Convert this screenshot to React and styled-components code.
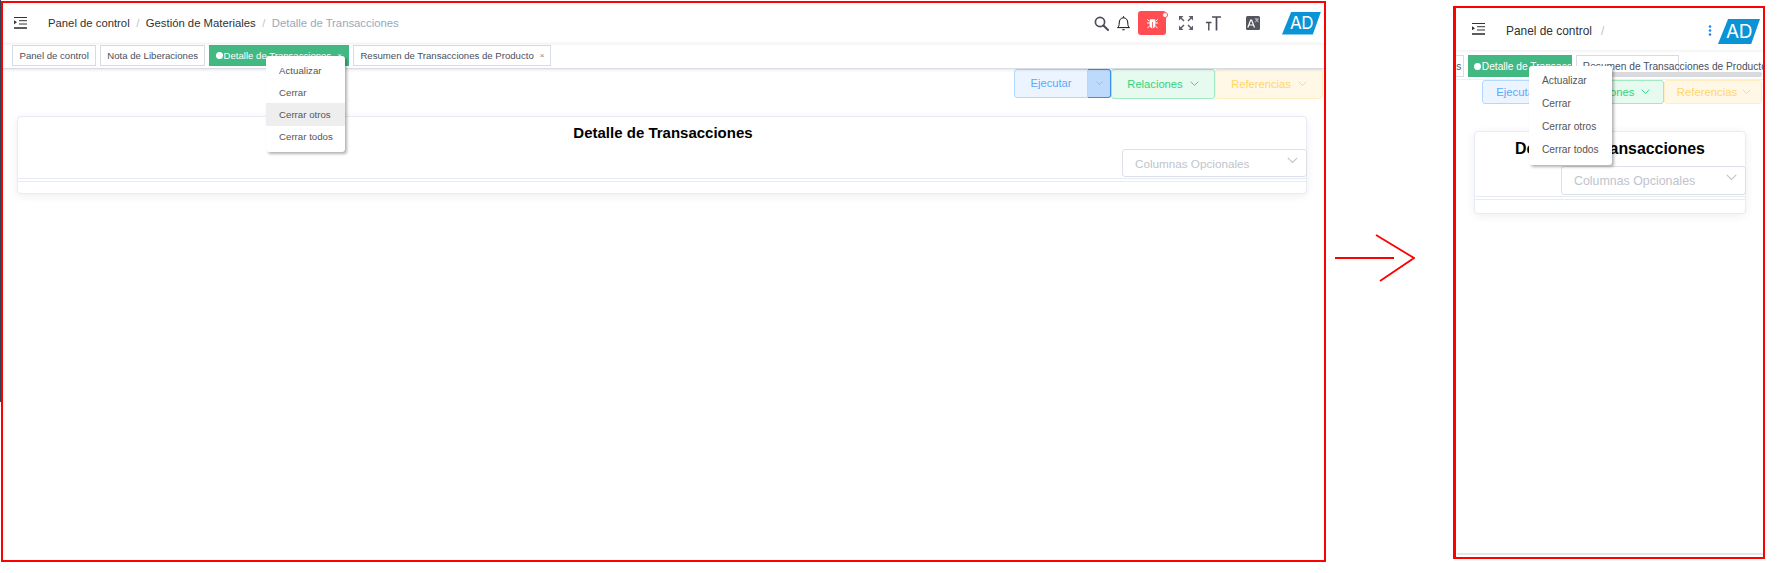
import React from 'react';
import styled, { createGlobalStyle } from 'styled-components';

const Global = createGlobalStyle`
  html, body { margin: 0; padding: 0; background: #fff; }
  body { font-family: "Liberation Sans", Arial, sans-serif; }
  * { box-sizing: border-box; }
`;

const Stage = styled.div`
  width: 1785px; height: 573px; display: flex; align-items: flex-start; overflow: hidden; background: #fff;
`;
const Sliver = styled.div`width: 1px; height: 402px; background: #304156; flex: none;`;
const Frame = styled.section`
  position: relative; flex: none; display: flex; flex-direction: column; overflow: hidden; background: #fff;
  border: 2px solid #ff0000;
  width: ${p => (p.$m ? 312 : 1325)}px;
  height: ${p => (p.$m ? 553 : 561)}px;
  margin-top: ${p => (p.$m ? 6 : 1)}px;
  ${p => p.$m && 'border-left-width: 3px;'}
`;
const ArrowSvg = styled.svg`flex: none; width: 80px; height: 50px; margin: 234px 38px 0 9px;`;

const Header = styled.header`
  flex: none; display: flex; align-items: center;
  height: ${p => (p.$m ? 42 : 40)}px;
  padding: ${p => (p.$m ? '0 3px 0 16px' : '0 3px 0 11px')};
  box-shadow: 0 1px 3px rgba(0, 21, 41, 0.07);
  position: relative; z-index: 1;
`;
const Crumbs = styled.nav`
  display: flex; align-items: center; white-space: nowrap; color: #303133;
  font-size: ${p => (p.$m ? 11.9 : 11.3)}px;
  margin-left: 21px;
  ${p => (p.$m ? 'margin-top: 4px;' : 'margin-bottom: 1px;')}
`;
const Sep = styled.span`color: #c0c4cc; margin: 0 ${p => (p.$m ? 9 : 6.5)}px;`;
const CrumbLast = styled.span`color: #97a8be;`;
const Tools = styled.div`margin-left: auto; display: flex; align-items: center;`;
const Slot = styled.span`display: flex; align-items: center; justify-content: center; flex: none; margin-left: ${p => p.$ml || 0}px;`;
const BugBox = styled.span`
  position: relative; flex: none; width: 28px; height: 24px; margin-left: 8px; border-radius: 3px; background: #ff4d51;
  display: flex; align-items: center; justify-content: center;
`;
const BugDot = styled.i`
  position: absolute; right: -2px; top: 1px; width: 6px; height: 6px; border-radius: 50%;
  background: #fff; border: 1.5px solid #ff4d51;
`;
const Logo = styled.div`
  flex: none; display: flex; align-items: center; justify-content: center;
  width: ${p => (p.$m ? 42 : 39)}px; height: ${p => (p.$m ? 25 : 23)}px;
  margin-left: ${p => (p.$m ? 6 : 22)}px;
  ${p => p.$m && 'margin-top: 5px;'}
  background: #0a93d5; color: #fff;
  font-family: Inter, "Liberation Sans", sans-serif; font-weight: 400;
  font-size: ${p => (p.$m ? 19 : 17)}px; letter-spacing: -0.5px;
  clip-path: polygon(24% 0, 100% 0, 79% 100%, 0 100%);
`;

const TabBar = styled.div`
  flex: none; position: relative; display: flex; overflow: hidden;
  height: ${p => (p.$m ? 30 : 26)}px;
  padding: ${p => (p.$m ? '5px 0 0 0' : '2px 0 0 9px')};
  gap: 4px; align-items: flex-start;
  border-bottom: 1px solid ${p => (p.$m ? '#eeeff2' : '#d8dce5')};
  ${p => !p.$m && 'box-shadow: 0 1px 3px rgba(0,0,0,0.1);'}
`;
const Tab = styled.div`
  flex: none; display: flex; align-items: center; white-space: nowrap;
  height: ${p => (p.$m ? 22 : 21)}px;
  padding: ${p => (p.$m ? '1px' : '0')} ${p => p.$tail ?? 6}px 0 ${p => (p.$m ? 5.5 : 6.5)}px;
  font-size: ${p => (p.$m ? 10.2 : 9.6)}px;
  border: 1px solid ${p => (p.$on ? '#42b983' : '#d8dce5')};
  background: ${p => (p.$on ? '#42b983' : '#fff')};
  color: ${p => (p.$on ? '#fff' : '#495060')};
  ${p => p.$w && `width: ${p.$w}px;`}
  ${p => p.$clip && 'overflow: hidden;'}
  ${p => p.$shift && `margin-left: ${p.$shift}px;`}
`;
const TabDot = styled.i`flex: none; width: 7px; height: 7px; border-radius: 50%; background: #fff; margin-right: 1px; margin-left: -1px;`;
const TabClose = styled.span`font-size: 8px; margin-left: 6px; color: ${p => (p.$on ? '#fff' : '#7b8494')};`;
const ScrollThumb = styled.div`
  position: absolute; left: 115px; right: 1px; top: 22px; height: 5px; border-radius: 2px; background: #d9dadd;
`;

const Toolbar = styled.div`
  flex: none; display: flex; justify-content: flex-end;
  height: ${p => (p.$m ? 24 : 30)}px;
  padding-right: 1px;
`;
const tones = {
  blue: ['#ecf5ff', '#b3d8ff', '#5aa9fb'],
  green: ['#e7faf0', '#a3e9c4', '#2fd47b'],
  yellow: ['#fff8e6', '#ffeec4', '#ffd666'],
};
const ActionBtn = styled.div`
  flex: none; display: flex; align-items: center; justify-content: center;
  gap: ${p => p.$gap ?? 7}px;
  padding-left: ${p => p.$lead ?? 0}px;
  font-size: ${p => (p.$m ? 11.3 : 11.2)}px;
  width: ${p => p.$w}px;
  height: 100%;
  background: ${p => tones[p.$tone][0]};
  border: 1px solid ${p => tones[p.$tone][1]};
  color: ${p => tones[p.$tone][2]};
  border-radius: ${p => p.$r || '3px'};
`;
const SplitDrop = styled.div`
  flex: none; display: flex; align-items: center; justify-content: center;
  width: ${p => p.$w}px; height: ${p => (p.$m ? '100%' : '29px')};
  background: #bddafc; border: 1px solid #3a8ee6; border-left: none; border-radius: 0 3px 3px 0; color: #7fb4ee;
`;
const MainBtn = styled(ActionBtn)`
  height: ${p => (p.$m ? '100%' : '29px')};
  padding-bottom: ${p => (p.$m ? 0 : 2)}px;
`;

const Card = styled.div`
  flex: none; background: #fff; border: 1px solid #e6ebf5; border-radius: 4px;
  box-shadow: 0 2px 10px rgba(0, 0, 0, 0.07);
  width: ${p => (p.$m ? 272 : 1290)}px;
  height: ${p => (p.$m ? 83 : 78)}px;
  margin: ${p => (p.$m ? '27px 0 0 18px' : '17px 0 0 14px')};
`;
const Title = styled.h1`
  margin: 0; text-align: center; font-weight: 700; color: #000; white-space: nowrap;
  font-size: ${p => (p.$m ? 15.9 : 15)}px;
  height: ${p => (p.$m ? 34 : 31)}px;
  line-height: ${p => (p.$m ? 34 : 31)}px;
  padding-left: ${p => (p.$m ? 0 : 2)}px;
`;
const SelectRow = styled.div`
  display: flex; justify-content: flex-end;
  margin: ${p => (p.$m ? 0 : '1px')} -1px 0 0;
`;
const SelectBox = styled.div`
  display: flex; justify-content: space-between;
  width: 185px; height: ${p => (p.$m ? 29 : 28)}px;
  border: 1px solid #dcdfe6; border-radius: 3px; background: #fff; color: #c0c4cc;
  font-size: ${p => (p.$m ? 12.4 : 11.7)}px;
  line-height: ${p => (p.$m ? 28 : 27)}px;
  padding: 0 8px 0 12px;
`;
const SelectChevron = styled.span`display: flex; margin-top: 7px;`;
const Rule = styled.div`height: 1px; background: #e6ebf5; margin-top: ${p => p.$t}px;`;

const Menu = styled.ul`
  position: absolute; z-index: 5; margin: 0; list-style: none; background: #fff; border-radius: 3px;
  box-shadow: 2px 2px 3px rgba(0, 0, 0, 0.3);
  left: ${p => (p.$m ? 73 : 263)}px;
  top: ${p => (p.$m ? 58 : 53)}px;
  width: ${p => (p.$m ? 83 : 79)}px;
  padding: 3px 0 4px;
`;
const MenuItem = styled.li`
  display: flex; align-items: center; white-space: nowrap; color: #555;
  height: ${p => (p.$m ? 23 : 22.2)}px;
  padding-left: 13px;
  font-size: ${p => (p.$m ? 10.2 : 9.7)}px;
  background: ${p => (p.$hot ? '#eee' : 'transparent')};
`;
const Foot = styled.div`margin: auto 0 2px 1px; height: 2px; background: #e6e6e6; flex: none;`;
const Dots = styled.svg`flex: none; display: block; margin: 2px 0 0 auto;`;

const Hamburger = () => (
  <svg width="13" height="12" viewBox="0 0 13 12" style={{ flex: 'none' }}>
    <path d="M0 .5h13M5 3.700h8M5 7h8" stroke="#333" strokeWidth="1" fill="none" />
    <path d="M0 11h13" stroke="#333" strokeWidth="1.600" />
    <path d="M0 3.200 3 5.200 0 7.200z" fill="#333" />
  </svg>
);
const Search = () => (
  <svg width="15" height="15" viewBox="0 0 15 15"><circle cx="6" cy="6" r="4.600" fill="none" stroke="#4a4d55" strokeWidth="1.700" /><path d="M9.500 9.500 14 14" stroke="#4a4d55" strokeWidth="2" strokeLinecap="round" /></svg>
);
const Bell = () => (
  <svg width="13" height="15" viewBox="0 0 13 15"><path d="M.5 11.600c1.300-1 1.700-2.200 1.700-4.600 0-3 1.600-5.200 4.300-5.200S10.800 4 10.800 7c0 2.400.4 3.600 1.700 4.600z" fill="none" stroke="#111" strokeWidth="1" /><path d="M6.500 .3v1.500M5.300 13.700h2.400" stroke="#111" strokeWidth="1.100" /></svg>
);
const BugIcon = () => (
  <svg width="11" height="11" viewBox="0 0 11 11"><ellipse cx="5.500" cy="6.500" rx="2.900" ry="3.700" fill="#fff" /><path d="M3.200 1.800h4.600v1.700H3.200zM0 5h11M.3 10l2.400-2M10.700 10 8.300 8M.3 1.500l2.400 2M10.700 1.500 8.300 3.500" stroke="#fff" strokeWidth="1" fill="#fff" /><path d="M5.500 4v6" stroke="#ff4d51" strokeWidth=".8" /></svg>
);
const Fullscreen = () => (
  <svg width="14" height="14" viewBox="0 0 14 14" fill="#5a5e66"><path d="M0 0h4.500L0 4.500zM14 0v4.500L9.500 0zM0 14V9.500L4.500 14zM14 14H9.500L14 9.500z" /><path d="M2 2l3 3M12 2 9 5M2 12l3-3M12 12 9 9" stroke="#5a5e66" strokeWidth="1.500" /></svg>
);
const FontSize = () => (
  <svg width="15" height="15" viewBox="0 0 15 15" fill="none" stroke="#4a4d55"><path d="M6 1h9M10.500 1v13.500" strokeWidth="1.700" /><path d="M0 6.500h5.500M2.800 6.500v8" strokeWidth="1.400" /></svg>
);
const Translate = () => (
  <svg width="14" height="14" viewBox="0 0 14 14"><rect width="14" height="14" rx="1.500" fill="#54565e" /><path d="M1.800 11.500 4.700 4h.9l2.900 7.500M3 9h4.300" stroke="#fff" strokeWidth="1.200" fill="none" /><path d="M8.800 3h4M10 2.500c.3 2 1.200 3 2.800 3.300M11.800 3c-.3 1.500-1.300 2.500-3 3" stroke="#dfe0e3" strokeWidth=".7" fill="none" /></svg>
);
const Chevron = ({ c = 'currentColor', s = 9 }) => (
  <svg width={s} height={s * 0.6} viewBox="0 0 10 6"><path d="M.7.7 5 5l4.300-4.300" stroke={c} strokeWidth="1" fill="none" /></svg>
);

const menu = ['Actualizar', 'Cerrar', 'Cerrar otros', 'Cerrar todos'];

const TabMenu = ({ m, hot }) => (
  <Menu $m={m}>
    {menu.map(t => <MenuItem key={t} $m={m} $hot={t === hot}>{t}</MenuItem>)}
  </Menu>
);

const CardBlock = ({ m }) => (
  <Card $m={m}>
    <Title $m={m}>Detalle de Transacciones</Title>
    <SelectRow $m={m}>
      <SelectBox $m={m}>Columnas Opcionales <SelectChevron><Chevron s={11} /></SelectChevron></SelectBox>
    </SelectRow>
    <Rule $t={1} />
    <Rule $t={2} />
  </Card>
);

export default function App() {
  return (
    <Stage>
      <Global />
      <Sliver />
      <Frame>
        <Header>
          <Hamburger />
          <Crumbs>
            <span>Panel de control</span><Sep>/</Sep>
            <span>Gestión de Materiales</span><Sep>/</Sep>
            <CrumbLast>Detalle de Transacciones</CrumbLast>
          </Crumbs>
          <Tools>
            <Slot><Search /></Slot>
            <Slot $ml={8}><Bell /></Slot>
            <BugBox><BugIcon /><BugDot /></BugBox>
            <Slot $ml={13}><Fullscreen /></Slot>
            <Slot $ml={13}><FontSize /></Slot>
            <Slot $ml={25}><Translate /></Slot>
            <Logo>AD</Logo>
          </Tools>
        </Header>
        <TabBar>
          <Tab>Panel de control</Tab>
          <Tab>Nota de Liberaciones</Tab>
          <Tab $on><TabDot />Detalle de Transacciones<TabClose $on>×</TabClose></Tab>
          <Tab>Resumen de Transacciones de Producto<TabClose>×</TabClose></Tab>
        </TabBar>
        <Toolbar>
          <MainBtn $tone="blue" $w={74} $r="3px 0 0 3px">Ejecutar</MainBtn>
          <SplitDrop $w={23}><Chevron s={7} /></SplitDrop>
          <ActionBtn $tone="green" $w={104}>Relaciones <Chevron /></ActionBtn>
          <ActionBtn $tone="yellow" $w={108}>Referencias <Chevron /></ActionBtn>
        </Toolbar>
        <CardBlock />
        <TabMenu hot="Cerrar otros" />
      </Frame>

      <ArrowSvg viewBox="0 0 80 50">
        <path d="M0 24h59M41 1l38 23-34 23" stroke="#ff0000" strokeWidth="1.800" fill="none" />
      </ArrowSvg>

      <Frame $m>
        <Header $m>
          <Hamburger />
          <Crumbs $m>
            <span>Panel de control</span><Sep $m>/</Sep>
          </Crumbs>
          <Dots width="4" height="11" viewBox="0 0 4 11" fill="#1e88f0">
            <circle cx="2" cy="1.500" r="1.300" /><circle cx="2" cy="5.500" r="1.300" /><circle cx="2" cy="9.500" r="1.300" />
          </Dots>
          <Logo $m>AD</Logo>
        </Header>
        <TabBar $m>
          <Tab $m $shift={-97.5} $tail={2}>Nota de Liberaciones</Tab>
          <Tab $m $on $w={104} $clip><TabDot />Detalle de Transacciones</Tab>
          <Tab $m $w={103}>Resumen de Transacciones de Producto</Tab>
          <ScrollThumb />
        </TabBar>
        <Toolbar $m>
          <MainBtn $m $tone="blue" $w={70} $r="3px 0 0 3px">Ejecutar</MainBtn>
          <SplitDrop $m $w={13}><Chevron s={7} /></SplitDrop>
          <ActionBtn $m $tone="green" $w={99}>Relaciones <Chevron /></ActionBtn>
          <ActionBtn $m $tone="yellow" $w={98} $gap={5} $lead={2}>Referencias <Chevron /></ActionBtn>
        </Toolbar>
        <CardBlock m />
        <TabMenu m />
        <Foot />
      </Frame>
    </Stage>
  );
}
